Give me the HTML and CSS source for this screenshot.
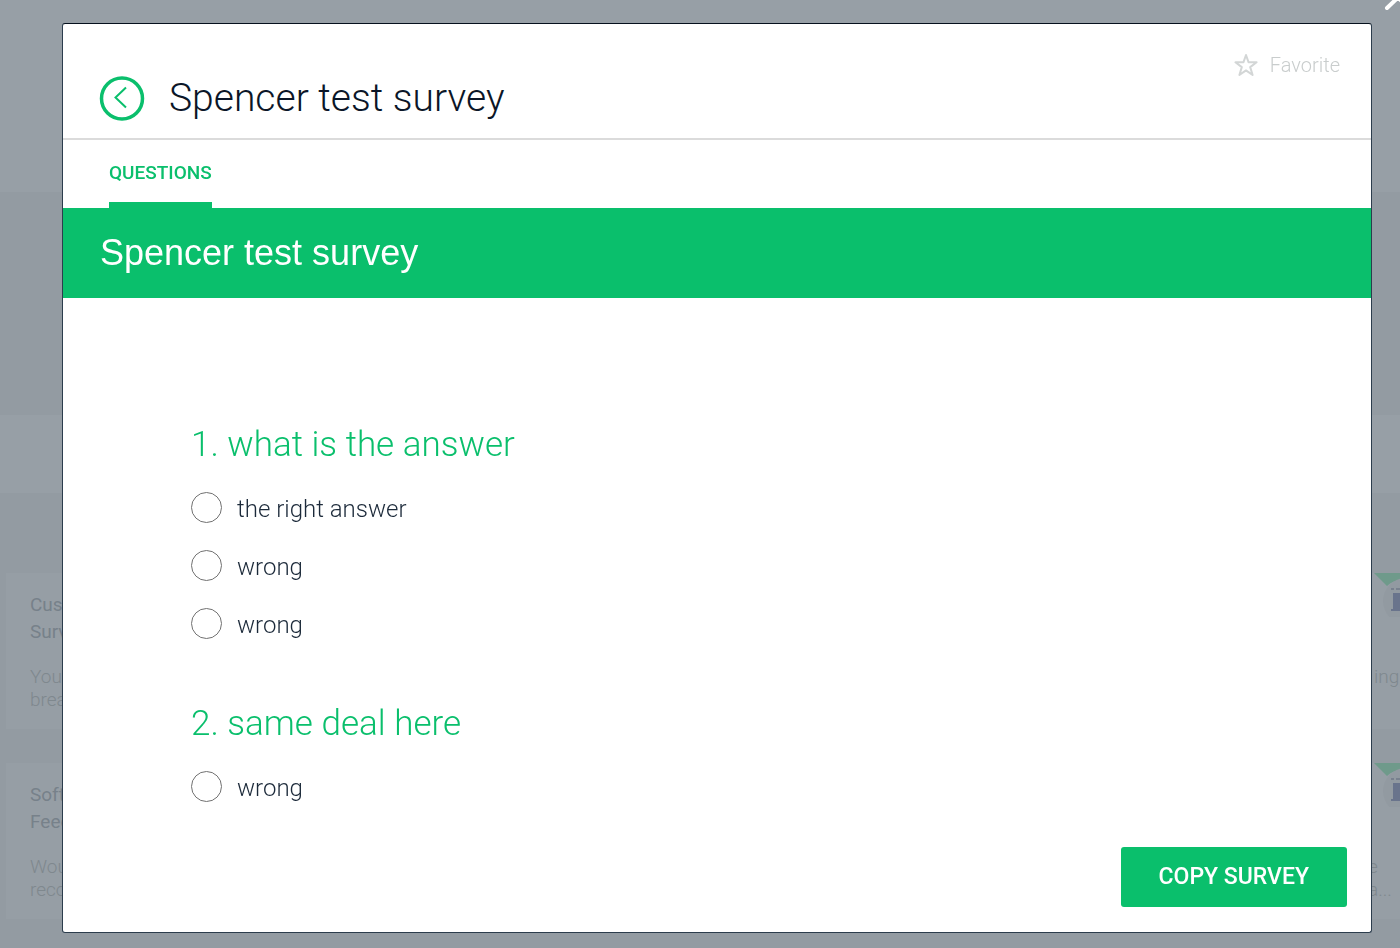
FILE: index.html
```html
<!DOCTYPE html>
<html lang="en">

<head>
	<meta charset="utf-8">
	<meta name="viewport" content="width=device-width, initial-scale=1.0">
	<title>Spencer test survey</title>
	<link rel="stylesheet" href="styles.css">
</head>

<body>
	<div class="page">
		<div class="band band-top"></div>
		<div class="band band-hero"></div>
		<div class="band band-tabs"></div>
		<div class="templates">
			<article class="card">
				<div class="card-text">
					<h3>Customer<br>Survey</h3>
					<p>Your<br>break</p>
				</div>
				<div class="card-side">
					<svg width="26" height="44" viewBox="0 0 26 44">
						<path d="M0 0H26V7Q18 8 13 13Z" fill="#6f9a8b" />
						<circle cx="32" cy="28" r="23" fill="#929aa1" />
						<path d="M17 16h3M22 16h4" stroke="#78818e" stroke-width="2" />
						<path d="M19 20h7v18h-9v-2h2z" fill="#69748c" />
					</svg>
					<p class="side-first">ing</p>
				</div>
			</article>
			<article class="card">
				<div class="card-text">
					<h3>Software<br>Feedback</h3>
					<p>Would<br>recommend</p>
				</div>
				<div class="card-side">
					<svg width="26" height="44" viewBox="0 0 26 44">
						<path d="M0 0H26V7Q18 8 13 13Z" fill="#6f9a8b" />
						<circle cx="32" cy="28" r="23" fill="#929aa1" />
						<path d="M17 16h3M22 16h4" stroke="#78818e" stroke-width="2" />
						<path d="M19 20h7v18h-9v-2h2z" fill="#69748c" />
					</svg>
					<p class="side-last">e<br>a...</p>
				</div>
			</article>
		</div>
	</div>

	<div class="overlay">
		<button class="close" aria-label="Close">
			<svg width="16" height="12" viewBox="0 0 16 12">
				<path d="M3 8L14 -2.500M12 -4L20 3" fill="none" stroke="#fff" stroke-width="4" stroke-linecap="round" />
			</svg>
		</button>

		<section class="modal">
			<header>
				<button class="back" aria-label="Back">
					<svg width="46" height="46" viewBox="0 0 46 46" fill="none" stroke="#0abf6c">
						<circle cx="23" cy="23.500" r="20.500" stroke-width="3.500" />
						<path d="M27 12.500L16.500 22.500L27 32.500" stroke-width="2" />
					</svg>
				</button>
				<h1>Spencer test survey</h1>
				<button class="favorite">
					<svg width="24" height="24" viewBox="0 0 24 24">
						<path d="M12 2L14.500 9.200L22.600 9.300L16.200 14.100L18.600 22L12 17.400L5.400 22L7.800 14.100L1.400 9.300L9.500 9.200Z" fill="none" stroke="#d3d6d6" stroke-width="2" stroke-linejoin="round" />
					</svg>
					Favorite
				</button>
			</header>

			<nav>
				<a class="tab" href="#questions">QUESTIONS</a>
			</nav>

			<h2 class="banner">Spencer test survey</h2>

			<form class="questions" id="questions">
				<fieldset>
					<legend>1. what is the answer</legend>
					<label><input type="radio" name="q1"> the right answer</label>
					<label><input type="radio" name="q1"> wrong</label>
					<label><input type="radio" name="q1"> wrong</label>
				</fieldset>
				<fieldset>
					<legend>2. same deal here</legend>
					<label><input type="radio" name="q2"> wrong</label>
				</fieldset>
			</form>

			<footer>
				<button class="copy">COPY SURVEY</button>
			</footer>
		</section>
	</div>
</body>

</html>
```

FILE: styles.css
```css
* {
	box-sizing: border-box;
}

body {
	margin: 0;
	background-color: #939ba2;
	font-family: Roboto, "Liberation Sans", sans-serif;
}

button {
	border: 0;
	padding: 0;
	background: none;
	font-family: inherit;
	cursor: pointer;
}

svg {
	display: block;
}

/*____________________Page behind____________________*/
.page {
	height: 100vh;
	overflow: hidden;
}

.band-top {
	height: 192px;
	background-color: #979fa6;
}

.band-hero {
	height: 223px;
}

.band-tabs {
	height: 78px;
	background-color: #979fa6;
}

.templates {
	display: grid;
	gap: 34px;
	padding: 80px 0 0 6px;
}

.card {
	display: flex;
	justify-content: space-between;
	height: 156px;
	padding-left: 24px;
	background-color: #969ea5;
}

.card h3 {
	margin: 18px 0 20px;
	font-size: 19px;
	font-weight: 400;
	line-height: 27px;
	color: #77818a;
}

.card p {
	margin: 0;
	font-size: 19px;
	font-weight: 300;
	line-height: 23px;
	color: #7f888e;
}

.card-side {
	width: 26px;
	white-space: nowrap;
}

.card-side p {
	margin-top: 48px;
}

.card-side .side-last {
	margin-left: -6px;
}

/*____________________Modal____________________*/
.overlay {
	position: fixed;
	inset: 0;
	display: flex;
	padding: 23px 28px 15px 62px;
}

.close {
	position: absolute;
	top: 0;
	right: 0;
}

.modal {
	flex: 1;
	display: flex;
	flex-direction: column;
	overflow: auto;
	border: 1px solid #2c3d4d;
	border-top-color: #05101d;
	border-radius: 3px;
	background-color: white;
}

header {
	flex: none;
	display: flex;
	align-items: flex-start;
	height: 116px;
	padding: 29px 31px 0 36px;
	border-bottom: 2px solid #dbdbdb;
}

.back {
	margin-top: 22px;
}

h1 {
	flex: 1;
	margin: 21px 0 0 24px;
	font-size: 39px;
	font-weight: 300;
	line-height: 48px;
	color: #0b1628;
}

.favorite {
	display: flex;
	align-items: center;
	gap: 12px;
	font-size: 20px;
	font-weight: 300;
	line-height: 22px;
	color: #c9cdcd;
}

nav {
	flex: none;
	display: flex;
	padding-left: 46px;
}

.tab {
	height: 68px;
	padding-top: 21px;
	border-bottom: 6px solid #0abf6c;
	font-size: 19px;
	font-weight: 500;
	line-height: 24px;
	color: #0abf6c;
	text-decoration: none;
}

.banner {
	margin: 0;
	padding: 22px 37px;
	background-color: #0abf6c;
	font-family: "Liberation Sans", Arial, sans-serif;
	font-size: 36px;
	font-weight: 400;
	line-height: 46px;
	color: white;
}

/*____________________Questions____________________*/
.questions {
	flex: 1 0 auto;
	padding: 123px 128px 0;
}

fieldset {
	margin: 0 0 34px;
	padding: 0;
	border: 0;
}

fieldset:last-child {
	margin-bottom: 0;
}

legend {
	padding: 0 0 23px;
	font-size: 35px;
	font-weight: 300;
	line-height: 48px;
	color: #0abf6c;
}

label {
	display: flex;
	align-items: flex-start;
	gap: 15px;
	height: 58px;
	font-size: 24px;
	font-weight: 300;
	line-height: 34px;
	color: #1c2a3a;
}

input {
	appearance: none;
	flex: none;
	width: 31px;
	height: 31px;
	margin: 0;
	border: 1px solid #707070;
	border-radius: 50%;
}

/*____________________Footer____________________*/
footer {
	flex: none;
	display: flex;
	justify-content: flex-end;
	padding: 0 24px 25px;
}

.copy {
	padding: 15px 38px;
	border-radius: 3px;
	background-color: #0abf6c;
	font-size: 23px;
	font-weight: 500;
	line-height: 30px;
	color: white;
}
```
